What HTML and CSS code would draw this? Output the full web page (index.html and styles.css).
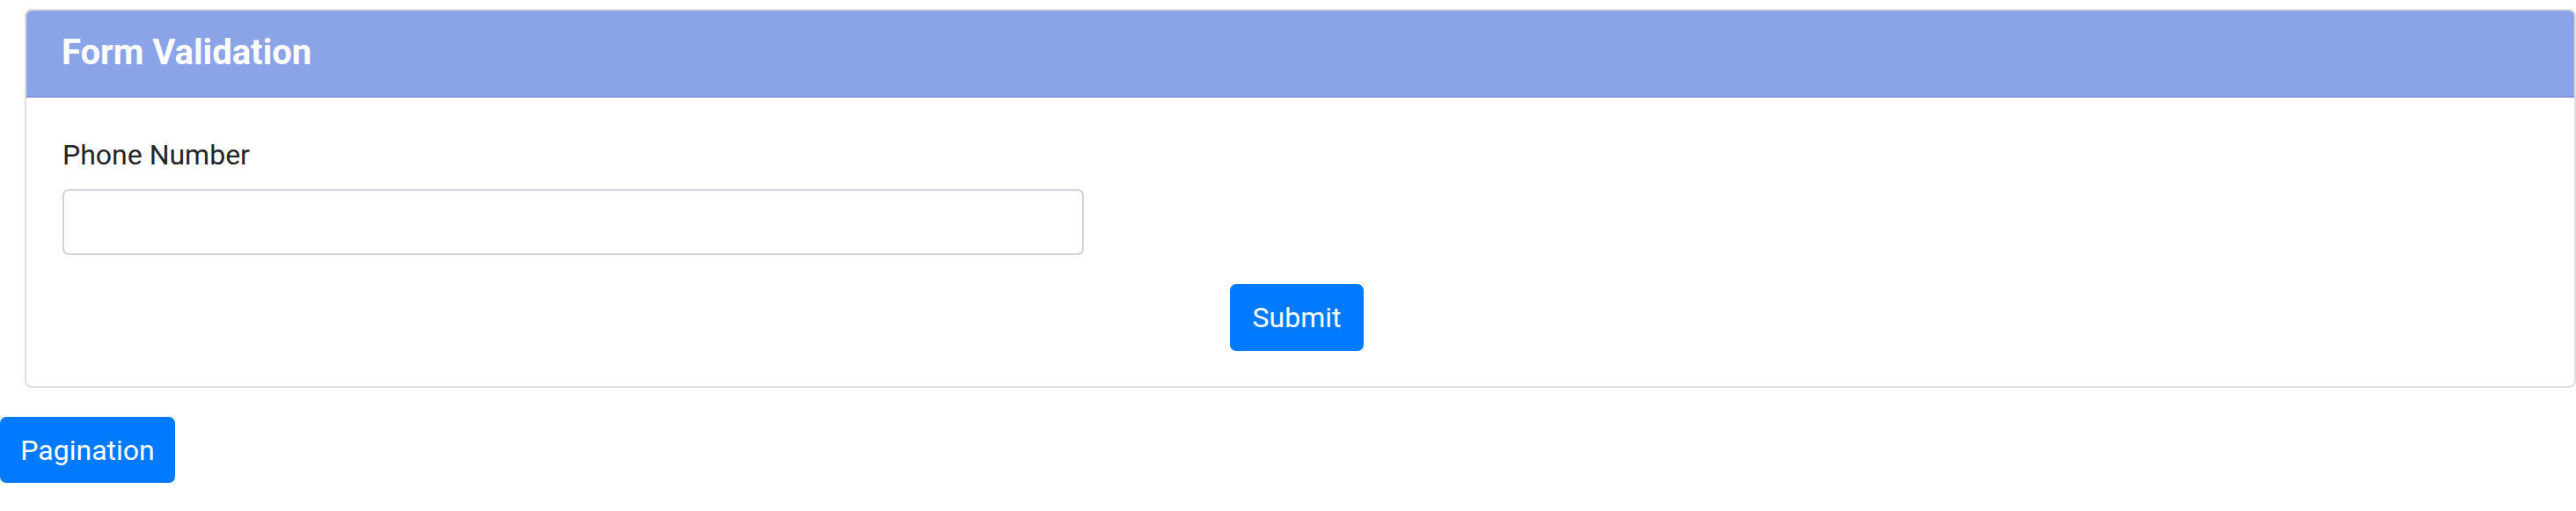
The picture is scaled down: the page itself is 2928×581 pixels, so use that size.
FILE: index.html
```html
<!DOCTYPE html>
<html lang="en">
<head>
<meta charset="utf-8">
<title>Form Validation</title>
<link rel="stylesheet" href="styles.css">
</head>
<body>
<div class="card">
  <div class="card-header">
    <h5 class="card-title">Form Validation</h5>
  </div>
  <form class="card-body">
    <label class="field-label" for="phone">Phone Number</label>
    <input class="field-input" id="phone" type="text">
    <div class="actions">
      <button class="btn" type="button">Submit</button>
    </div>
  </form>
</div>
<button class="btn btn-page" type="button">Pagination</button>
</body>
</html>
```

FILE: styles.css
```css
html, body {
  margin: 0;
  padding: 0;
  background: #ffffff;
  font-family: Roboto, "Liberation Sans", sans-serif;
  color: #212529;
}

.card {
  margin: 10px 0 0 28px;
  border: 2px solid #dfdfdf;
  border-radius: 8px;
  overflow: hidden;
  background: #ffffff;
}

.card-header {
  background: #8ba4e8;
  border-bottom: 2px solid #7b93d8;
  padding: 25px 40px 26px;
}

.card-title {
  margin: 0;
  font-size: 40px;
  line-height: 46px;
  font-weight: 700;
  color: #ffffff;
}

.card-body {
  display: flex;
  flex-direction: column;
  align-items: flex-start;
  padding: 42px 49px 40px 41px;
}

.field-label {
  font-size: 32px;
  line-height: 46px;
  margin-bottom: 16px;
}

.field-input {
  box-sizing: border-box;
  width: 1161px;
  height: 75px;
  border: 2px solid #ced4da;
  border-radius: 7px;
  background: #ffffff;
  font-family: inherit;
  font-size: 32px;
  padding: 0 22px;
  margin: 0;
}

.actions {
  align-self: stretch;
  display: flex;
  justify-content: center;
  margin-top: 33px;
}

.btn {
  box-sizing: border-box;
  height: 76px;
  padding: 0 26px;
  border: none;
  border-radius: 7px;
  background: #007bff;
  color: #ffffff;
  font-family: Roboto, "Liberation Sans", sans-serif;
  font-size: 32px;
  line-height: 46px;
  cursor: pointer;
}

.btn-page {
  display: block;
  margin-top: 33px;
  height: 75px;
  width: 199px;
  padding: 0;
}
```
